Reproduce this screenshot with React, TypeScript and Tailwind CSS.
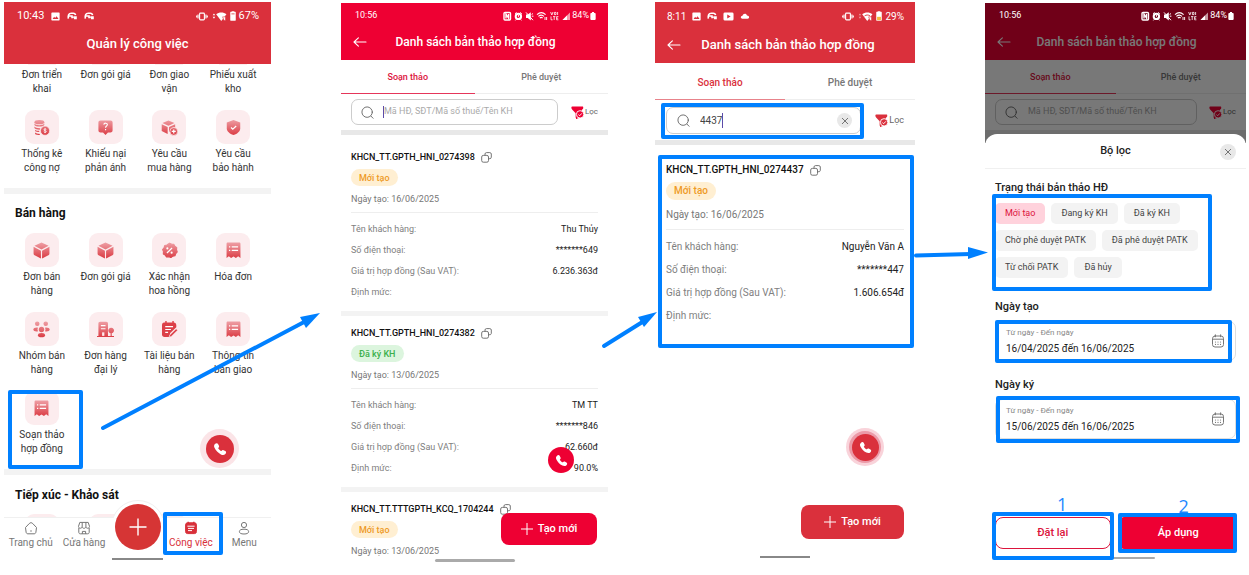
import React, { useState } from "react";
import clsx from "clsx";

// Blue highlight frame drawn over a control
function Mark({ className }: { className: string }) {
  return (
    <div
      className={clsx("pointer-events-none absolute z-20 rounded-[2px] border-4 border-[#0080ff]", className)}
    />
  );
}

/* ---------- status bar ---------- */

function PictureIcon() {
  return (
    <svg viewBox="0 0 10 10" className="size-[9px]" fill="#fff">
      <path fillRule="evenodd" d="M1.2.6h7.6a.8.8 0 0 1 .8.8v7.2a.8.8 0 0 1-.8.8H1.2a.8.8 0 0 1-.8-.8V1.4a.8.8 0 0 1 .8-.8ZM1.8 7.7h6.6L6.2 4.6 4.6 6.7 3.5 5.4Z" />
    </svg>
  );
}

function MaskIcon() {
  return (
    <svg viewBox="0 0 12 10" className="h-[8px] w-[10px]" fill="none" stroke="#fff" strokeWidth="2">
      <path d="M1.4 8.2C.8 4 2 1.6 5 1.6h2.6c1.8 0 2.6.8 2.8 2.4" />
      <path d="M2 5h4v1.8h1.6" />
      <path d="M7.6 6.4h3.4v1.8H8.4" />
    </svg>
  );
}

function PlayIcon() {
  return (
    <svg viewBox="0 0 12 10" className="h-[9px] w-[11px]" fill="#fff">
      <path fillRule="evenodd" d="M2 .6h8A1.6 1.6 0 0 1 11.6 2v6A1.6 1.6 0 0 1 10 9.4H2A1.6 1.6 0 0 1 .4 8V2A1.6 1.6 0 0 1 2 .6ZM4.6 2.8v4.4L8.4 5Z" />
    </svg>
  );
}

function CloudIcon() {
  return (
    <svg viewBox="0 0 12 8" className="h-[6px] w-[10px]" fill="#fff">
      <path d="M2.4 7.6C-.2 7.4-.2 4 2.6 3.8 3.4.2 8 .2 8.6 3.4c3.4-.2 4 4.2.8 4.2Z" />
    </svg>
  );
}

function VibrateIcon() {
  return (
    <svg viewBox="0 0 14 10" className="h-[9px] w-[12px]" fill="none" stroke="#fff" strokeWidth="1.3">
      <rect x="4.2" y="1" width="5.6" height="8" rx="1" />
      <path d="M2.4 2.6v4.8M.8 3.8v2.4M11.6 2.6v4.8M13.2 3.8v2.4" />
    </svg>
  );
}

function WifiFull({ faded }: { faded?: boolean }) {
  return (
    <svg viewBox="0 0 17 12" className="h-[11px] w-[16px]">
      <path d="M1.6 4.6 3 2.6l1.4 2ZM1.6 6.4 3 8.4l1.4-2Z" fill="#fff" opacity={faded ? 0.5 : 1} />
      <path d="M5.4 3.6C8.6.8 13.4.8 16.6 3.6L11 10.8Z" fill="#fff" />
      <path d="M12.4 6.4h3.2v4h-1.6z" fill="#fff" stroke="#da303c" strokeWidth=".6" />
      {faded && <path d="M8 5.4c2-1.4 4-1.4 6 0" stroke="#da303c" fill="none" />}
    </svg>
  );
}

function BatteryIcon({ low }: { low?: boolean }) {
  return (
    <svg viewBox="0 0 7 12" className="h-[10px] w-[6px]">
      <path d="M2 1V.2h3V1h1.2c.4 0 .6.2.6.6v9.6c0 .4-.2.6-.6.6H.8c-.4 0-.6-.2-.6-.6V1.6C.2 1.2.4 1 .8 1Z" fill="#fff" />
      {low ? <path d="M1.2 7h4.6v4H1.2z" fill="#f5b83d" /> : <path d="M1.6 2.6h3.8v1.6H1.6z" fill="#da303c" opacity=".6" />}
    </svg>
  );
}

function SamsungIcons() {
  return (
    <svg viewBox="0 0 69 10" className="h-[10px] w-[69px]" fill="none" stroke="#fff">
      {/* nfc */}
      <rect x="1" y="1.5" width="6.5" height="7.5" rx="1" strokeWidth="1.4" />
      <path d="M3 7.4V3.2l2.6 4V3" strokeWidth="1.4" />
      {/* alarm */}
      <circle cx="15.4" cy="5.4" r="2.7" strokeWidth="2" />
      <path d="M12 2.8 13.6 1.4M18.8 2.8 17.2 1.4M15.4 4v1.6l1 .8M13 8.6l-.6.8M17.8 8.6l.6.8" />
      {/* mute */}
      <path d="M23 3.6v3.4h1.8L27.8 9.4V1.2L24.8 3.6Z" fill="#fff" stroke="none" />
      <path d="M23 1.4l7 7.8M28.6 3.4l1.4-.8M28.8 5.2h1.6" />
      {/* wifi */}
      <path d="M34 3.6c2.6-2.4 6-2.4 8.6 0M35.4 5.4c1.8-1.6 4-1.6 5.6 0M36.8 7c.9-.8 2-.8 2.8 0" strokeWidth="1.1" />
      <path d="M42 6v3M43.6 6v3" strokeWidth=".9" />
      {/* volte */}
      <path d="M47.6 1l1.2 3 1.2-3M51.4 1.4h1.6v2.2h-1.6zM54.6 1v3M48 5.4v3.4h1.6M50 5.6h2.4M51.2 5.6v3.4M55.4 5.6h-1.8v3.2h1.8M53.6 7.2h1.6" strokeWidth=".8" />
      {/* signal */}
      <path d="M59.5 9 67 1.5V9Z" fill="#fff" fillOpacity=".6" stroke="none" />
      <path d="M59.5 9 64 4.5V9Z" fill="#fff" stroke="none" />
    </svg>
  );
}

function SamsungStatus() {
  return (
    <div className="flex h-[26px] items-center justify-between pr-3 pl-[14px] text-[9px] text-white">
      <span>10:56</span>
      <span className="flex items-center">
        <SamsungIcons />
        <span>84%</span>
        <svg viewBox="0 0 6 9" className="ml-px h-[8px] w-[6px]" fill="#fff">
          <path d="M1.8 0h2.4v1H5c.6 0 1 .4 1 1v6c0 .6-.4 1-1 1H1c-.6 0-1-.4-1-1V2c0-.6.4-1 1-1h.8Z" />
        </svg>
      </span>
    </div>
  );
}

/* ---------- small icons ---------- */

function BackIcon() {
  return (
    <svg viewBox="0 0 14 12" className="h-[12px] w-[14px]" fill="none" stroke="currentColor" strokeWidth="1.1" strokeLinecap="round" strokeLinejoin="round">
      <path d="M13 6H1M5.4 1.8 1 6l4.4 4.2" />
    </svg>
  );
}

function SearchIcon() {
  return (
    <svg viewBox="0 0 14 14" className="size-[13px] shrink-0" fill="none" stroke="#666" strokeLinecap="round">
      <circle cx="6.6" cy="6.6" r="5.6" />
      <path d="m10.8 11 2.2 2.2" />
    </svg>
  );
}

function FilterIcon({ color }: { color: string }) {
  return (
    <svg viewBox="0 0 14 14" className="size-[13px] shrink-0">
      <path d="M1.4.6h10.8c.8 0 1 .6 1 1.4 0 1-.6 1.6-1.4 2.2L8 13.2c-1 .6-3 .2-3-1V7.8L1.2 3.8C.2 2.8 0 .6 1.4.6Z" fill={color} />
      <circle cx="9.8" cy="9" r="4" fill={color} stroke="#fff" strokeWidth="1" />
      <path d="m7.9 9.1 1.4 1.4 2.4-2.6" fill="none" stroke="#fff" />
    </svg>
  );
}

function CopyIcon() {
  return (
    <svg viewBox="0 0 11 11" className="size-[11px]" fill="none" stroke="#666" strokeWidth=".9">
      <path d="M4 3.2V2c0-.8.5-1.4 1.4-1.4h3.4c.9 0 1.5.6 1.5 1.4v3.2c0 .9-.6 1.5-1.4 1.5H7.8" />
      <rect x=".7" y="3.4" width="6.8" height="6.8" rx="1.6" />
    </svg>
  );
}

function CalendarIcon() {
  return (
    <svg viewBox="0 0 14 14" className="size-[14px] shrink-0" fill="none" stroke="#777" strokeLinecap="round">
      <rect x="1.5" y="2" width="11" height="11" rx="2.5" />
      <path d="M1.5 5.2h11M4.4.8v2M9.6.8v2" />
      <path d="M4.5 8h.01M7 8h.01M9.5 8h.01M4.5 10.4h.01M7 10.4h.01M9.5 10.4h.01" strokeWidth="1.2" />
    </svg>
  );
}

function PhoneIcon({ className }: { className: string }) {
  return (
    <svg viewBox="0 0 24 24" className={className} fill="#fff">
      <path d="M3.4 3.6C5 1.6 7.6 1.4 8.6 3.4l1.6 3.2c.6 1.4.2 2.4-.8 3.2-.6.6-.6 1 0 1.8 1 1.4 2.2 2.6 3.6 3.4.8.6 1.2.4 1.8-.2 1-1.2 2-1.4 3.2-.8l3 1.6c2 1.2 1.8 3.4.2 5-2 2-4.6 2.2-7.6.8C8.6 18.8 4.8 14.8 2.6 10 1.4 7.4 1.6 5.4 3.4 3.6Z" />
    </svg>
  );
}

function CloseIcon() {
  return (
    <svg viewBox="0 0 8 8" className="size-[8px]" stroke="#666" strokeWidth=".9">
      <path d="m1 1 6 6M7 1 1 7" />
    </svg>
  );
}

/* ---------- tile icons, 24x24 ---------- */

const TILE = "url(#tile-red)";

const tileIcons: Record<string, React.ReactNode> = {
  coins: (
    <>
      <ellipse cx="9" cy="4.5" rx="7" ry="3" />
      <path d="M2 6.5c1.5 3 12.5 3 14 0v2c-1.5 3-12.5 3-14 0ZM2 10.7c1.5 2 5 2.6 8.6 2.3l-1.2 2c-3.4 0-6.4-.6-7.4-2.3ZM3 15c1.4 1.4 3.4 1.7 5.8 1.7v1.8C6.2 18.5 4 18 3 17ZM3 19c1.4 1.4 3.6 1.7 6 1.7l1 1.8C6.8 22.5 4 22 3 21Z" />
      <circle cx="17" cy="16.5" r="6.5" stroke="#fdecee" />
      <path d="M18.8 14.8c-1-1.2-3.6-.8-3.4.6.2 1.5 3.4.8 3.4 2.4 0 1.4-2.6 1.6-3.6.2M17 13v7" fill="none" stroke="#fff" strokeWidth="1.1" />
    </>
  ),
  question: (
    <>
      <path d="M5 2h14c2 0 3 1.2 3 3v11c0 2-1 3-3 3h-3.5L12 22.5 8.5 19H5c-2 0-3-1-3-3V5c0-1.8 1-3 3-3Z" />
      <path d="M9.6 8c.4-3 5.2-2.6 5 .2-.2 1.8-2.5 1.7-2.5 4M12.1 14v1.8" fill="none" stroke="#fff" strokeWidth="1.6" />
    </>
  ),
  boxPlus: (
    <>
      <path d="m10.5 2 8.5 3.6-8.5 4L2 5.6ZM1 7.4l8.4 4v9.8L1 17ZM11.4 11.4l8.6-4v4.2c-3.6-.4-6.6 2-7 5.6l-1.6 1Z" />
      <circle cx="18" cy="17.5" r="5.5" stroke="#fdecee" />
      <path d="M18 14.7v5.6M15.2 17.5h5.6" stroke="#fff" strokeWidth="1.7" />
    </>
  ),
  shield: (
    <>
      <path d="M12 1.5 21.5 5v8c0 4.5-4 7.7-9.5 9.7C6.5 20.7 2.5 17.5 2.5 13V5Z" />
      <path d="m8.5 12 2.5 2.4 4.8-4.6" fill="none" stroke="#fff" strokeWidth="1.7" />
    </>
  ),
  box: <path d="m12 .8 10 4.4-10 5.4L2 5.2ZM.8 6.8l10.4 5.4v11L3 19.2c-1.4-.8-2.2-1.6-2.2-3ZM23.2 6.8l-10.4 5.4v11l8.2-4c1.4-.8 2.2-1.6 2.2-3Z" />,
  percent: (
    <>
      <path
        d="m12 1.6 2.8 1.4 3.2.2 1.6 2.800 2.600 1.900-.3 3.100 1 3-2.100 2.400-1.100 3-3.100.6-2.600 1.900-3-1-3.200.2-1.800-2.600-2.700-1.700.2-3.200-1.200-2.900 2-2.500L5.300 5l3.100-.7Z"
        stroke={TILE}
        strokeWidth="1.6"
        strokeLinejoin="round"
      />
      <path d="m8.4 15.6 7.2-7.2" stroke="#fff" strokeWidth="1.7" />
      <circle cx="9" cy="9" r="1.5" fill="#fff" />
      <circle cx="15" cy="15" r="1.5" fill="#fff" />
    </>
  ),
  bill: (
    <>
      <path d="M4 .8h16c1.2 0 1.8.8 1.8 1.8v20l-3.2-2.4-3.2 2.4-3.4-2-3.4 2-3.2-2.400-3.200 2.400v-20C2.200 1.600 3 .8 4 .8Z" />
      <path d="M9.5 6.8h9M9.5 11.8h9M5.6 6.8h1.8M5.600 11.800h1.800" stroke="#fff" strokeWidth="1.6" />
    </>
  ),
  group: (
    <>
      <circle cx="6" cy="4" r="3.2" />
      <circle cx="18" cy="4" r="3.2" />
      <circle cx="12" cy="12" r="3.8" />
      <path d="M7 9.4A5.6 5.6 0 0 0 7 14.6c-3 .8-6.6-.4-6.6-2.6S4 8.6 7 9.4ZM17 9.4a5.6 5.6 0 0 1 0 5.2c3 .8 6.6-.4 6.6-2.6S20 8.6 17 9.4Z" />
      <ellipse cx="12" cy="20" rx="5" ry="3" />
    </>
  ),
  building: (
    <>
      <path d="M2 21V3.5C2 2 2.8 1 4.5 1H13c1.7 0 2.5 1 2.5 2.5V21h3.7v-3.6a4 4 0 1 1 1.6 0V21H24v1.6H0V21Z" />
      <path d="M5.5 6.5H12M5.5 11H12" stroke="#fff" strokeWidth="1.6" />
      <path d="M7.2 16h3.2v5H7.2z" fill="#fdecee" />
    </>
  ),
  note: (
    <g fill="#dc4048">
      <path d="M4.5 2H6V0h2v2h8V0h2v2c2.4.2 3.6 1.6 3.6 4v2.8L13 17l-1.6 5.6H5c-2.2 0-3.6-1.4-3.6-3.6V6c0-2.4 1-3.8 3.1-4Z" />
      <path d="m21.4 11 2 2-9 9-3 .8.9-2.9Z" stroke="#fdecee" strokeWidth=".8" />
      <path d="M6 8h11M6 12h8M6 16h4" stroke="#fff" strokeWidth="1.6" />
    </g>
  ),
};

function Tile({ icon, label, marked }: { icon: string; label: string; marked?: boolean }) {
  return (
    <a href="#" className="relative flex flex-col items-center text-center text-[10px] leading-[14px] text-[#333]">
      <span className="flex size-[34px] items-center justify-center rounded-[9px] bg-[#fcecee]">
        <svg viewBox="0 0 24 24" className="size-[17px]" fill={TILE}>
          {tileIcons[icon]}
        </svg>
      </span>
      <span className="mt-[3px] w-[53px]">{label}</span>
      {marked && <Mark className="-top-px -right-[9px] -bottom-[13px] -left-[2px]" />}
    </a>
  );
}

const hiddenTiles = ["Đơn triển khai", "Đơn gói giá", "Đơn giao vận", "Phiếu xuất kho"];

const serviceTiles = [
  { icon: "coins", label: "Thống kê công nợ" },
  { icon: "question", label: "Khiếu nại phản ánh" },
  { icon: "boxPlus", label: "Yêu cầu mua hàng" },
  { icon: "shield", label: "Yêu cầu bảo hành" },
];

const salesTiles = [
  { icon: "box", label: "Đơn bán hàng" },
  { icon: "box", label: "Đơn gói giá" },
  { icon: "percent", label: "Xác nhận hoa hồng" },
  { icon: "bill", label: "Hóa đơn" },
  { icon: "group", label: "Nhóm bán hàng" },
  { icon: "building", label: "Đơn hàng đại lý" },
  { icon: "note", label: "Tài liệu bán hàng" },
  { icon: "bill", label: "Thông tin bàn giao" },
  { icon: "bill", label: "Soạn thảo hợp đồng", marked: true },
];

/* ---------- screen 1 ---------- */

function NavItem({ label, active, children }: { label: string; active?: boolean; children: React.ReactNode }) {
  return (
    <button
      type="button"
      className={clsx("relative flex flex-col items-center gap-px pt-[3px] text-[10px] leading-[14px] whitespace-nowrap", active ? "text-[#d8303a]" : "text-[#777]")}
    >
      <svg viewBox="0 0 14 14" className="size-[14px]" fill="none" stroke="currentColor" strokeWidth="1">
        {children}
      </svg>
      <span>{label}</span>
      {active && <Mark className="-top-[6px] -right-[5px] -bottom-[5px] -left-[1px]" />}
    </button>
  );
}

function WorkScreen() {
  return (
    <div className="mt-[2px]">
      <header className="bg-[#da303c] text-white">
        <div className="flex h-[28px] items-center justify-between pr-3 pl-[13px] text-[11px]">
          <span className="flex items-center gap-[7px]">
            10:43 <PictureIcon />
            <MaskIcon />
            <MaskIcon />
          </span>
          <span className="flex items-center gap-[3px]">
            <VibrateIcon />
            <WifiFull />
            <BatteryIcon />
            67%
          </span>
        </div>
        <h1 className="pt-[6px] pb-[12px] text-center text-[13px] leading-4 font-medium">Quản lý công việc</h1>
      </header>

      <section className="px-[6px] pb-[13px]">
        <div className="grid grid-cols-4 justify-items-center text-center text-[10px] leading-[14px] text-[#333]">
          {hiddenTiles.map((label) => (
            <a href="#" key={label} className="flex w-[53px] flex-col items-center">
              <span className="mb-[3px] h-px w-7 bg-[#fcecee]" />
              {label}
            </a>
          ))}
        </div>
        <div className="mt-[14px] grid grid-cols-4">
          {serviceTiles.map((t) => (
            <Tile key={t.label} {...t} />
          ))}
        </div>
      </section>
      <div className="h-[6px] bg-[#f3f3f3]" />

      <section className="relative px-[6px] pt-[11px] pb-[13px]">
        <h2 className="pl-[5px] text-[12px] leading-4 font-bold text-[#111]">Bán hàng</h2>
        <div className="mt-[12px] grid grid-cols-4 gap-y-[14px]">
          {salesTiles.map((t) => (
            <Tile key={t.label + t.icon} {...t} />
          ))}
        </div>
        <button
          type="button"
          aria-label="Gọi"
          className="absolute right-[32px] bottom-px flex size-[39px] items-center justify-center rounded-full bg-[#fbe4e7]"
        >
          <span className="flex size-[28px] items-center justify-center rounded-full bg-[#da303c]">
            <PhoneIcon className="size-[14px]" />
          </span>
        </button>
      </section>
      <div className="h-[6px] bg-[#f3f3f3]" />

      <section className="px-[6px] pt-[12px]">
        <h2 className="pl-[5px] text-[12px] leading-4 font-bold text-[#111]">Tiếp xúc - Khảo sát</h2>
        <div className="mt-[11px] grid h-[3px] grid-cols-4 justify-items-center overflow-hidden">
          {[1, 2, 3].map((n) => (
            <span key={n} className="size-[34px] rounded-[9px] bg-[#fcecee]" />
          ))}
        </div>
      </section>

      <nav className="relative grid grid-cols-5 border-t border-[#f0f0f0] bg-white pb-[8px]">
        <NavItem label="Trang chủ">
          <path d="M1.5 6.5 5.2 2.6c1.2-1.2 2.4-1.2 3.6 0l3.7 3.9-.6 4.7c-.2 1-.8 1.6-1.9 1.6H4c-1 0-1.7-.5-1.9-1.6ZM7 9.2v1.6" />
        </NavItem>
        <NavItem label="Cửa hàng">
          <path d="M1.8 7v4.2c0 1 .6 1.6 1.6 1.6h7.2c1 0 1.6-.6 1.6-1.6V7M2.8 1.4h8.4l1.3 4c0 2.4-3.2 2.4-3.6.4-.4 2-3.4 2-3.8 0-.4 2-3.6 2-3.6-.4ZM5.2 1.4v4.4M8.9 1.4v4.4M5.4 12.8v-2.4h3.2v2.4" />
        </NavItem>
        <span />
        <NavItem label="Công việc" active>
          <path d="M3.6 1.8h6.8c1.4 0 2 .8 2 2v6.8c0 1.4-.8 2-2 2H3.6c-1.4 0-2-.8-2-2V3.8c0-1.2.8-2 2-2Z" fill="currentColor" />
          <path d="M4.2.8v1.6M9.8.8v1.6" strokeWidth="1.4" />
          <path d="M3.4 5.2h7.2M4 7.4h6M4 9.6h4" stroke="#fff" />
        </NavItem>
        <NavItem label="Menu">
          <circle cx="7" cy="4" r="2.6" />
          <ellipse cx="7" cy="10.6" rx="4.6" ry="2.4" />
        </NavItem>
        <div className="absolute -top-[18px] left-1/2 h-[18px] w-[54px] -translate-x-1/2 overflow-hidden">
          <div className="size-[54px] rounded-full border border-[#f0f0f0] bg-white" />
        </div>
        <button
          type="button"
          aria-label="Thêm"
          className="absolute -top-[14px] left-1/2 flex size-[46px] -translate-x-1/2 items-center justify-center rounded-full bg-[#d63535]"
        >
          <svg viewBox="0 0 18 18" className="size-[18px]" stroke="#fff" strokeWidth="1.4">
            <path d="M9 .5v17M.5 9h17" />
          </svg>
        </button>
      </nav>
      <div className="mx-auto h-[2px] w-[51px] bg-[#888]" />
    </div>
  );
}

/* ---------- contract list ---------- */

type ListHeadProps = { large?: boolean; query?: string; showCaret?: boolean; children: React.ReactNode };

function ListHead({ large, query = "", showCaret, children }: ListHeadProps) {
  const [tab, setTab] = useState(0);
  const red = large ? "#da303c" : "#ee0033";
  return (
    <div>
      <header className={clsx("text-white", large ? "bg-[#da303c]" : "bg-[#ee0033]")}>
        {children}
        <div className={clsx("flex items-center px-3", large ? "h-[33px] pb-[4px]" : "h-[31px] pb-[5px]")}>
          <button type="button" aria-label="Quay lại">
            <BackIcon />
          </button>
          <h1 className={clsx("flex-1 pr-3 text-center font-medium whitespace-nowrap", large ? "pl-1 text-[13px]" : "text-[12px]")}>
            Danh sách bản thảo hợp đồng
          </h1>
        </div>
      </header>
      <div role="tablist" className={clsx("grid grid-cols-2 font-medium", large ? "h-[37px] text-[10px]" : "h-[34px] text-[9px]")}>
        {["Soạn thảo", "Phê duyệt"].map((label, i) => (
          <button
            key={label}
            type="button"
            role="tab"
            aria-selected={tab === i}
            onClick={() => setTab(i)}
            className={clsx("flex flex-col", tab === i ? (large ? "text-[#da303c]" : "text-[#dc143c]") : "text-[#777]")}
          >
            <span className="flex w-full flex-1 items-center justify-center pt-[2px]">{label}</span>
            <span className={clsx("h-px w-full", tab === i ? (large ? "bg-[#e8838b]" : "bg-[#e5365a]") : "bg-[#eee]")} />
          </button>
        ))}
      </div>
      <div className={clsx("flex items-center justify-between", large ? "px-[11px] pt-[7px] pb-[6px]" : "px-[10px] pt-[5px] pb-[5px]")}>
        <label className={clsx("relative flex items-center rounded-[7px] border border-[#ccc]", large ? "h-[27px] w-[82%] pl-[10px] text-[10px]" : "h-[26px] w-[84%] pl-[9px] text-[9px]")}>
          <SearchIcon />
          {!large && <span className={clsx("ml-[9px] h-3 w-px", showCaret && "bg-[#5b4ba8]")} />}
          <input
            type="text"
            aria-label="Tìm kiếm"
            defaultValue={query}
            placeholder="Mã HĐ, SĐT/Mã số thuế/Tên KH"
            className={clsx("min-w-0 bg-transparent outline-none placeholder:text-[#aaa]", large ? "ml-[10px] field-sizing-content text-[#444]" : "flex-1")}
          />
          {large && (
            <>
              <span className="h-[15px] w-px bg-[#5b4ba8]" />
              <button type="button" aria-label="Xóa" className="mr-2 ml-auto flex size-[15px] items-center justify-center rounded-full bg-[#e8e8e8]">
                <CloseIcon />
              </button>
              <Mark className="-top-[5px] -right-[4px] -bottom-[6px] -left-[6px]" />
            </>
          )}
        </label>
        <button type="button" className={clsx("flex items-center gap-px text-[#666]", large ? "text-[9px]" : "text-[8px]")}>
          <FilterIcon color={red} />
          Lọc
        </button>
      </div>
      <div className="h-[5px] bg-[#e8e8e8]" />
    </div>
  );
}

type Contract = {
  code: string;
  status: string;
  date: string;
  rows?: [string, string][];
};

const contracts: Contract[] = [
  {
    code: "KHCN_TT.GPTH_HNI_0274398",
    status: "Mới tạo",
    date: "16/06/2025",
    rows: [
      ["Tên khách hàng:", "Thu Thủy"],
      ["Số điện thoại:", "*******649"],
      ["Giá trị hợp đồng (Sau VAT):", "6.236.363đ"],
      ["Định mức:", ""],
    ],
  },
  {
    code: "KHCN_TT.GPTH_HNI_0274382",
    status: "Đã ký KH",
    date: "13/06/2025",
    rows: [
      ["Tên khách hàng:", "TM TT"],
      ["Số điện thoại:", "*******846"],
      ["Giá trị hợp đồng (Sau VAT):", "62.660đ"],
      ["Định mức:", "90.0%"],
    ],
  },
  { code: "KHCN_TT.TTTGPTH_KCQ_1704244", status: "Mới tạo", date: "13/06/2025" },
];

const found: Contract = {
  code: "KHCN_TT.GPTH_HNI_0274437",
  status: "Mới tạo",
  date: "16/06/2025",
  rows: [
    ["Tên khách hàng:", "Nguyễn Văn A"],
    ["Số điện thoại:", "*******447"],
    ["Giá trị hợp đồng (Sau VAT):", "1.606.654đ"],
    ["Định mức:", ""],
  ],
};

function ContractCard({ item, large }: { item: Contract; large?: boolean }) {
  const signed = item.status === "Đã ký KH";
  return (
    <article className={clsx(large ? "px-[11px] text-[10px] leading-4" : "px-[10px] text-[9px] leading-[14px]")}>
      <h3 className="flex items-center gap-[6px] font-medium text-[#111]">
        {item.code}
        <button type="button" aria-label="Sao chép">
          <CopyIcon />
        </button>
      </h3>
      <span
        className={clsx(
          "inline-flex items-center rounded-full px-2 align-top font-medium",
          large ? "mt-1 h-[18px]" : "mt-[5px] h-[17px]",
          signed ? "bg-[#dcf5de] text-[#3cb04c]" : "bg-[#ffefd2] text-[#ee9a26]",
        )}
      >
        {item.status}
      </span>
      <p className={clsx("text-[#777]", large ? "mt-[7px]" : "mt-[6px]")}>Ngày tạo: {item.date}</p>
      {item.rows && (
        <dl className="mt-[6px] border-t border-[#eee] pt-[5px]">
          {item.rows.map(([label, value]) => (
            <div key={label} className={clsx("flex items-center justify-between", large ? "h-[23px]" : "h-[21px]")}>
              <dt className="text-[#808080]">{label}</dt>
              <dd className="text-[#222]">{value}</dd>
            </div>
          ))}
        </dl>
      )}
    </article>
  );
}

function CreateButton({ className }: { className: string }) {
  return (
    <button type="button" className={clsx("flex items-center justify-center gap-[5px] rounded-[8px] text-[11px] font-medium text-white", className)}>
      <svg viewBox="0 0 12 12" className="size-[12px]" stroke="#fff" strokeWidth="1">
        <path d="M6 0v12M0 6h12" />
      </svg>
      Tạo mới
    </button>
  );
}

function ListScreen() {
  return (
    <div className="relative mt-[3px]">
      <ListHead showCaret>
        <SamsungStatus />
      </ListHead>
      <div className="pt-[15px] pb-[9px]">
        <ContractCard item={contracts[0]} />
      </div>
      <div className="h-[5px] bg-[#f3f3f3]" />
      <div className="relative pt-[10px] pb-[9px]">
        <ContractCard item={contracts[1]} />
        <button type="button" aria-label="Gọi" className="absolute right-[34px] bottom-[14px] flex size-[26px] items-center justify-center rounded-full bg-[#ee0033]">
          <PhoneIcon className="size-[13px]" />
        </button>
      </div>
      <div className="h-[5px] bg-[#f3f3f3]" />
      <div className="pt-[10px]">
        <ContractCard item={contracts[2]} />
      </div>
      <div className="mx-auto mt-px h-[3px] w-[80px] rounded-full bg-[#aaa]" />
      <CreateButton className="absolute right-[11px] bottom-[17px] h-[32px] w-[96px] bg-[#ee0033]" />
    </div>
  );
}

function SearchScreen() {
  return (
    <div className="mt-[2px] flex flex-col">
      <ListHead large query="4437">
        <div className="flex h-[28px] items-center justify-between pr-[11px] pl-[12px] text-[10px]">
          <span className="flex items-center gap-[6px]">
            8:11 <PictureIcon />
            <MaskIcon />
            <PlayIcon />
            <CloudIcon />
          </span>
          <span className="flex items-center gap-[3px]">
            <VibrateIcon />
            <WifiFull faded />
            <BatteryIcon low />
            29%
          </span>
        </div>
      </ListHead>
      <div className="relative pt-[17px] pb-[21px]">
        <ContractCard item={found} large />
        <Mark className="top-[10px] right-[1px] bottom-0 left-[3px]" />
      </div>
      <button type="button" aria-label="Gọi" className="mt-[80px] mr-[31px] flex size-[38px] items-center justify-center self-end rounded-full bg-[#f9d3da]">
        <span className="flex size-[32px] items-center justify-center rounded-full bg-[#eb9aa8]">
          <span className="flex size-[27px] items-center justify-center rounded-full bg-[#da303c]">
            <PhoneIcon className="size-[13px]" />
          </span>
        </span>
      </button>
      <CreateButton className="mt-[39px] mr-[11px] h-[34px] w-[103px] self-end bg-[#da303c]" />
      <div className="mx-auto mt-[17px] h-[2px] w-[50px] bg-[#888]" />
    </div>
  );
}

/* ---------- filter sheet ---------- */

const statuses = ["Mới tạo", "Đang ký KH", "Đã ký KH", "Chờ phê duyệt PATK", "Đã phê duyệt PATK", "Từ chối PATK", "Đã hủy"];

function DateField({ title, value, markClass }: { title: string; value: string; markClass: string }) {
  return (
    <div>
      <h3 className="text-[11px] leading-4 font-medium text-[#222]">{title}</h3>
      <div className="relative mt-[6px] flex h-[40px] items-center justify-between rounded-[7px] border border-[#ddd] px-[10px]">
        <label className="min-w-0 flex-1 text-[8px] leading-[14px] text-[#888]">
          Từ ngày - Đến ngày
          <input type="text" readOnly value={value} className="block h-4 w-full text-[10px] text-[#222] outline-none" />
        </label>
        <CalendarIcon />
        <Mark className={markClass} />
      </div>
    </div>
  );
}

function FilterScreen() {
  const [selected, setSelected] = useState("Mới tạo");
  return (
    <div className="mt-[3px]">
      <div className="relative">
        <ListHead>
          <div className="relative z-10">
            <SamsungStatus />
          </div>
        </ListHead>
        <div className="h-2 bg-[#e8e8e8]" />
        <div className="absolute inset-0 bg-black/53" />
      </div>
      <div role="dialog" aria-label="Bộ lọc" className="relative -mt-[9px] rounded-t-[12px] bg-white">
        <div className="flex h-[35px] items-center border-b border-[#f0f0f0] pt-px pr-[10px] pl-[26px]">
          <h2 className="flex-1 text-center text-[11px] font-medium text-[#222]">Bộ lọc</h2>
          <button type="button" aria-label="Đóng" className="flex size-4 items-center justify-center rounded-full bg-[#e8e8e8]">
            <CloseIcon />
          </button>
        </div>
        <div className="px-[10px] pt-[11px]">
          <h3 className="text-[11px] leading-4 font-medium text-[#222]">Trạng thái bản thảo HĐ</h3>
          <div className="relative mt-[7px] mr-[24px] flex flex-wrap gap-[6px] pb-[13px]">
            {statuses.map((s) => (
              <button
                key={s}
                type="button"
                onClick={() => setSelected(s)}
                className={clsx("h-[21px] rounded-[5px] px-[10px] text-[9px]", s === selected ? "bg-[#ffd2dc] text-[#dc143c]" : "bg-[#f3f3f3] text-[#444]")}
              >
                {s}
              </button>
            ))}
            <Mark className="-top-[9px] right-0 bottom-0 -left-[3px]" />
          </div>
          <div className="mt-[8px]">
            <DateField title="Ngày tạo" value="16/04/2025 đến 16/06/2025" markClass="-top-[2px] right-[3px] -bottom-[3px] -left-px" />
          </div>
          <div className="mt-[16px]">
            <DateField title="Ngày ký" value="15/06/2025 đến 16/06/2025" markClass="-top-[4px] -right-[5px] -bottom-[5px] left-0" />
          </div>
          <div className="mt-[78px] flex gap-[10px]">
            <div className="relative flex-1">
              <button type="button" className="h-[32px] w-full rounded-[8px] border border-[#dc143c] text-[11px] font-medium text-[#dc143c]">
                Đặt lại
              </button>
              <Mark className="-top-[5px] -right-[3px] -bottom-[11px] -left-[3px]" />
              <span className="absolute -top-[25px] left-[62px] z-30 font-['Open_Sans',sans-serif] text-[18px] leading-6 text-[#1e88ff]">1</span>
            </div>
            <div className="relative flex-1">
              <button type="button" className="h-[32px] w-full rounded-[3px] bg-[#ee0033] text-[11px] font-medium text-white">
                Áp dụng
              </button>
              <Mark className="-top-[4px] -right-[1px] -bottom-[4px] -left-[3px]" />
              <span className="absolute -top-[23px] left-[58px] z-30 font-['Open_Sans',sans-serif] text-[18px] leading-6 text-[#1e88ff]">2</span>
            </div>
          </div>
        </div>
        <div className="mx-auto mt-[8px] h-[2px] w-[78px] rounded-full bg-[#aaa]" />
      </div>
    </div>
  );
}

export default function App() {
  return (
    <main className="relative bg-white font-['Roboto',sans-serif]">
      <svg className="absolute size-0" aria-hidden="true">
        <linearGradient id="tile-red" gradientUnits="userSpaceOnUse" x1="0" y1="1" x2="0" y2="22">
          <stop offset="0" stopColor="#ee9ea4" />
          <stop offset="1" stopColor="#dc4048" />
        </linearGradient>
      </svg>
      <div className="grid grid-cols-[267fr_70fr_267fr_47fr_260fr_70fr_261fr] items-start pr-[3px] pl-1">
        <WorkScreen />
        <span />
        <ListScreen />
        <span />
        <SearchScreen />
        <span />
        <FilterScreen />
      </div>
      <svg viewBox="0 0 1249 575" className="pointer-events-none absolute top-0 left-0 z-30 w-full" stroke="#0080ff" fill="#0080ff" strokeWidth="4" strokeLinecap="round">
        <path d="M103 428 306 321" />
        <path d="m320 313-20 4 6 11Z" stroke="none" />
        <path d="m604 346 40-25" />
        <path d="m657 312-19 5 6 10Z" stroke="none" />
        <path d="m916 255.5 55-1.5" />
        <path d="m988 252.5-20-5.5v12Z" stroke="none" />
      </svg>
    </main>
  );
}
